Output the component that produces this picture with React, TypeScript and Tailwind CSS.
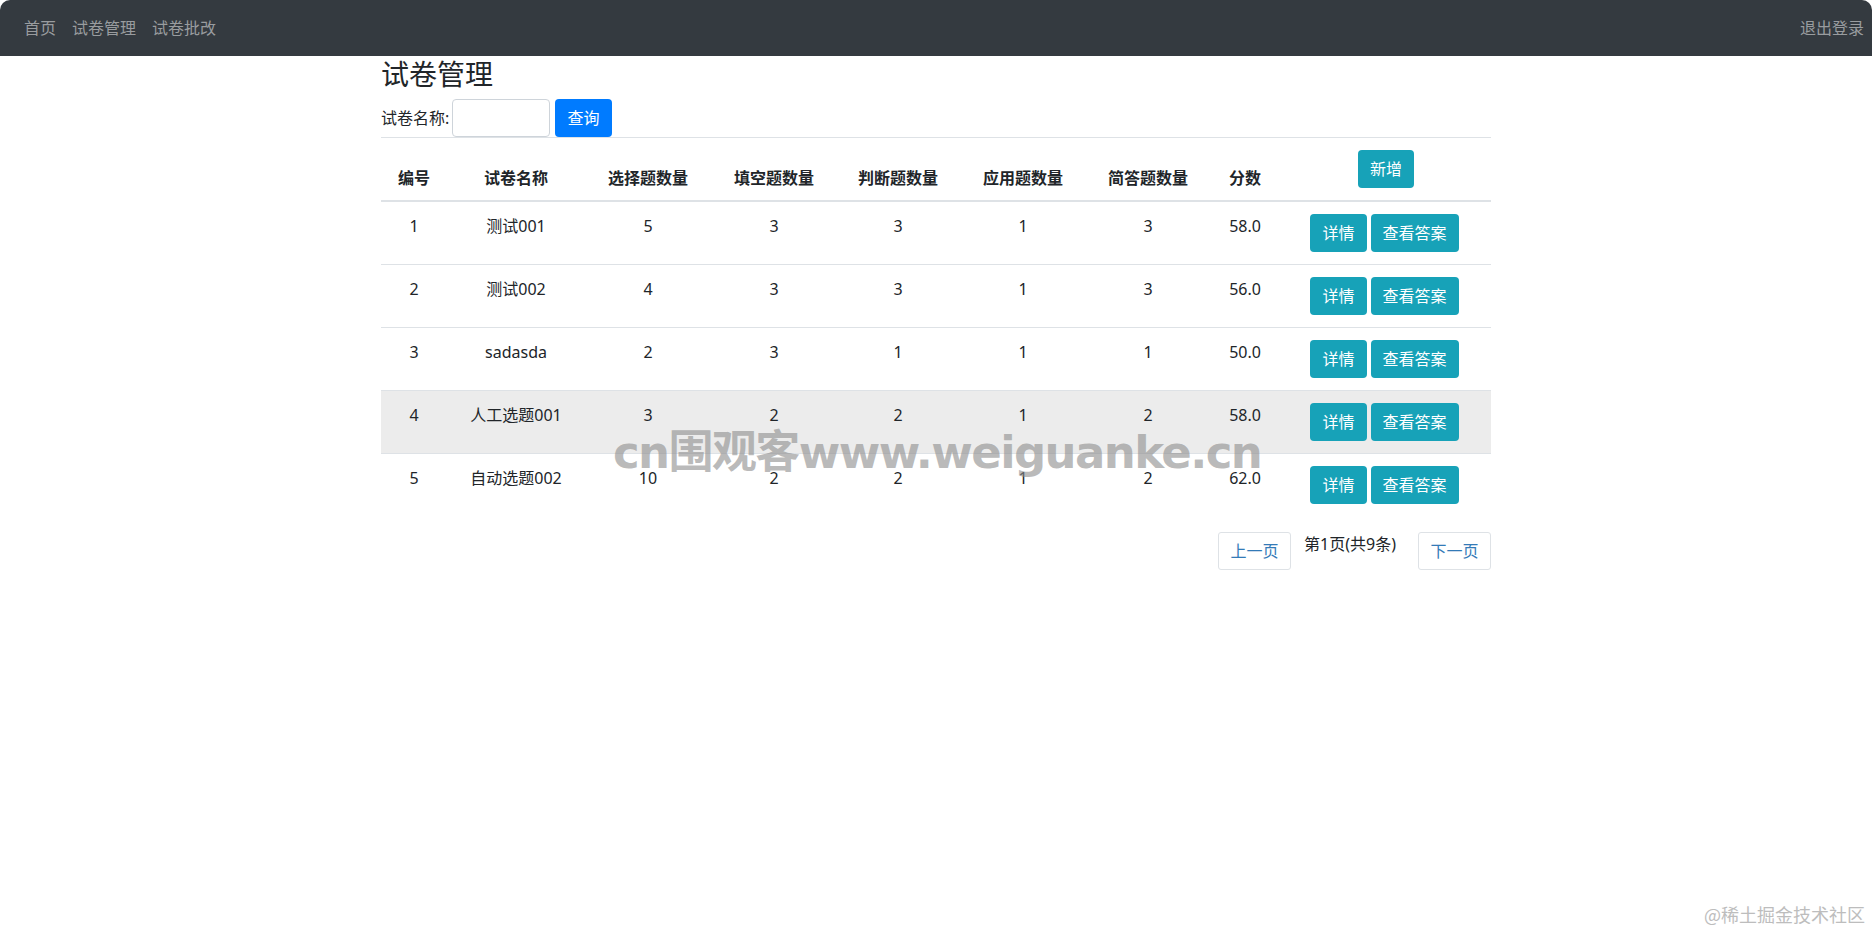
import React from "react";

const rows: (string | number)[][] = [
  [1, "测试001", 5, 3, 3, 1, 3, "58.0"],
  [2, "测试002", 4, 3, 3, 1, 3, "56.0"],
  [3, "sadasda", 2, 3, 1, 1, 1, "50.0"],
  [4, "人工选题001", 3, 2, 2, 1, 2, "58.0"],
  [5, "自动选题002", 10, 2, 2, 1, 2, "62.0"],
];

const headers = ["编号", "试卷名称", "选择题数量", "填空题数量", "判断题数量", "应用题数量", "简答题数量", "分数"];

export default function App() {
  return (
    <div className="relative h-[932px] w-full overflow-hidden bg-white text-[#212529] font-['Noto_Sans','Noto_Sans_CJK_SC',sans-serif] text-[16px]">
      <nav className="flex h-[56px] items-center justify-between rounded-t-[10px] bg-[#343a40] pl-4 pr-2">
        <div className="flex">
          {["首页", "试卷管理", "试卷批改"].map((t) => (
            <a key={t} className="px-2 py-2 leading-6 text-[#999c9f]">
              {t}
            </a>
          ))}
        </div>
        <a className="py-2 leading-6 text-[#999c9f]">退出登录</a>
      </nav>

      <div className="mx-auto w-[1110px]">
        <h3 className="mb-[7px] text-[28px] leading-[36px] font-normal">试卷管理</h3>
        <div className="flex h-[38px] items-center">
          <label className="w-[71px] leading-6 whitespace-nowrap">试卷名称:</label>
          <input className="h-[38px] w-[98px] rounded-[4px] border border-[#ced4da] bg-white px-2 outline-none" />
          <button className="ml-[5px] h-[38px] w-[57px] rounded-[4px] bg-[#007bff] leading-6 text-white">查询</button>
        </div>

        <table className="w-full table-fixed border-collapse">
          <colgroup>
            <col className="w-[66px]" />
            <col className="w-[138px]" />
            <col className="w-[126px]" />
            <col className="w-[126px]" />
            <col className="w-[122px]" />
            <col className="w-[128px]" />
            <col className="w-[122px]" />
            <col className="w-[72px]" />
            <col className="w-[210px]" />
          </colgroup>
          <thead>
            <tr>
              {headers.map((h) => (
                <th
                  key={h}
                  className="border-t border-b-2 border-t-[#dee2e6] border-b-[#dee2e6] p-3 pb-[10px] text-center align-bottom font-bold leading-6 whitespace-nowrap"
                >
                  {h}
                </th>
              ))}
              <th className="border-t border-b-2 border-t-[#dee2e6] border-b-[#dee2e6] p-3 text-center align-bottom">
                <button className="h-[38px] rounded-[4px] bg-[#17a2b8] px-3 leading-6 font-normal text-white">新增</button>
              </th>
            </tr>
          </thead>
          <tbody>
            {rows.map((r, i) => (
              <tr key={i} className={i === 3 ? "bg-[#ececec]" : ""}>
                {r.map((c, j) => (
                  <td key={j} className="border-t border-[#dee2e6] p-3 text-center align-top leading-6 whitespace-nowrap">
                    {c}
                  </td>
                ))}
                <td className="border-t border-[#dee2e6] p-3 text-center align-top whitespace-nowrap">
                  <div className="flex justify-center gap-[4px] pr-[3px]">
                    <button className="h-[38px] rounded-[4px] bg-[#17a2b8] px-3 leading-6 text-white">详情</button>
                    <button className="h-[38px] rounded-[4px] bg-[#17a2b8] px-3 leading-6 text-white">查看答案</button>
                  </div>
                </td>
              </tr>
            ))}
          </tbody>
        </table>

        <div className="mt-4 flex items-start justify-end">
          <button className="h-[38px] w-[73px] rounded-[3px] border border-[#dee2e6] bg-white leading-6 text-[#337ab7]">上一页</button>
          <span className="ml-[13px] leading-6">第1页(共9条)</span>
          <button className="ml-[22px] h-[38px] w-[73px] rounded-[3px] border border-[#dee2e6] bg-white leading-6 text-[#337ab7]">下一页</button>
        </div>
      </div>

      <div className="pointer-events-none absolute left-[613px] top-[425px] whitespace-nowrap text-[45px] leading-[56px] font-bold tracking-[-1.6px] text-[rgba(140,140,140,0.6)] font-['DejaVu_Sans','Noto_Sans_CJK_SC',sans-serif]">
        cn围观客www.weiguanke.cn
      </div>

      <div className="absolute right-[7px] top-[903px] text-[18px] leading-[22px] text-[#bdbdbd] font-['Noto_Sans_CJK_SC',sans-serif]">
        @稀土掘金技术社区
      </div>
    </div>
  );
}
